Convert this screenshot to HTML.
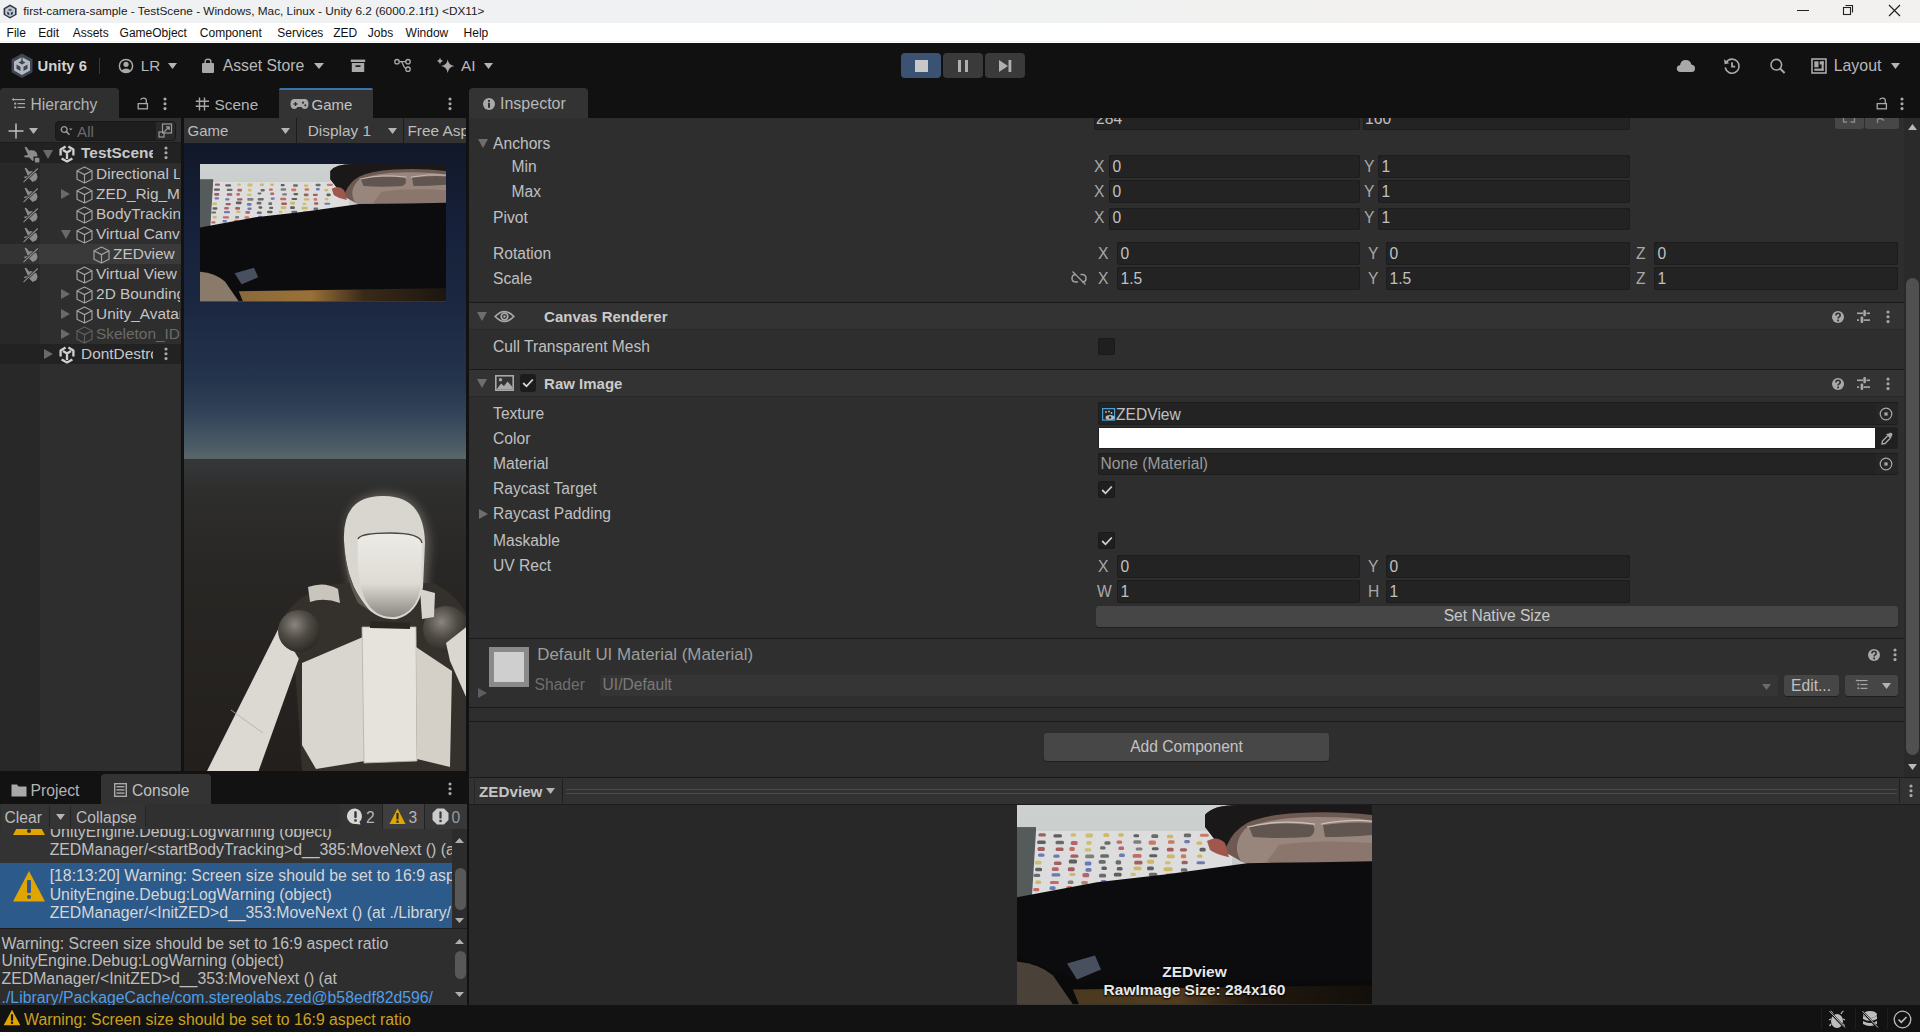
<!DOCTYPE html><html><head><meta charset="utf-8"><style>
html,body{margin:0;padding:0;}
body{width:1920px;height:1032px;overflow:hidden;position:relative;background:#282828;font-family:"Liberation Sans",sans-serif;}
.t{position:absolute;white-space:nowrap;line-height:1;}
.r{position:absolute;}
svg.r{overflow:visible;}
</style></head><body>
<div class="r" style="left:0px;top:0px;width:1920px;height:23px;background:linear-gradient(90deg,#eff1f3 0%,#f0f1f2 50%,#f3f1ef 80%,#f2f1f0 100%);"></div>
<svg class="r" style="left:3px;top:4px;" width="15" height="15" viewBox="0 0 15 15"><path d="M7 0.6 L13.6 4.2 L13.6 10.8 L7 14.4 L0.6 10.8 L0.6 4.2Z" fill="#2e3640"/><path d="M7 2.2 L12 5 L12 10.2 L7 13 L2.2 10.2 L2.2 5Z" fill="#c0cad6"/><path d="M7 4.6 L9.4 5.9 L7 7.2 L4.6 5.9Z" fill="#5a6470"/><path d="M4.2 7.6 L6.2 8.8 V11.2 L4.2 10Z M9.8 7.6 L7.8 8.8 V11.2 L9.8 10Z" fill="#2e3640"/></svg>
<div class="t" style="left:23.3px;top:5.6px;font-size:11.8px;color:#1a1a1a;">first-camera-sample - TestScene - Windows, Mac, Linux - Unity 6.2 (6000.2.1f1) &lt;DX11&gt;</div>
<div class="r" style="left:1797px;top:10px;width:12px;height:1px;background:#222;"></div>
<svg class="r" style="left:1842px;top:4px;" width="12" height="12" viewBox="0 0 12 12"><rect x="1.5" y="3.5" width="7" height="7" fill="none" stroke="#222" stroke-width="1.1"/><path d="M3.5 1.5 H10.5 V8.5" fill="none" stroke="#222" stroke-width="1.1"/></svg>
<svg class="r" style="left:1888px;top:4px;" width="13" height="13" viewBox="0 0 13 13"><path d="M1 1 L12 12 M12 1 L1 12" stroke="#222" stroke-width="1.2"/></svg>
<div class="r" style="left:0px;top:23px;width:1920px;height:20px;background:#ffffff;"></div>
<div class="r" style="left:0px;top:41px;width:1920px;height:1px;background:#f0f0f0;"></div>
<div class="t" style="left:6.6px;top:26.8px;font-size:12px;color:#111;">File</div>
<div class="t" style="left:38.3px;top:26.8px;font-size:12px;color:#111;">Edit</div>
<div class="t" style="left:72.7px;top:26.8px;font-size:12px;color:#111;">Assets</div>
<div class="t" style="left:119.6px;top:26.8px;font-size:12px;color:#111;">GameObject</div>
<div class="t" style="left:199.8px;top:26.8px;font-size:12px;color:#111;">Component</div>
<div class="t" style="left:277.3px;top:26.8px;font-size:12px;color:#111;">Services</div>
<div class="t" style="left:333.2px;top:26.8px;font-size:12px;color:#111;">ZED</div>
<div class="t" style="left:367.8px;top:26.8px;font-size:12px;color:#111;">Jobs</div>
<div class="t" style="left:405.6px;top:26.8px;font-size:12px;color:#111;">Window</div>
<div class="t" style="left:463.6px;top:26.8px;font-size:12px;color:#111;">Help</div>
<div class="r" style="left:0px;top:43px;width:1920px;height:45px;background:#111111;"></div>
<svg class="r" style="left:11px;top:53px;" width="22" height="26" viewBox="0 0 22 26"><path d="M11 0.4 L21.5 6.3 L21.5 19.3 L11 24.9 L0.5 19.3 L0.5 6.3Z" fill="#3e4652"/><path d="M11 4 L19 8.5 L19 17.5 L11 22 L3 17.5 L3 8.5Z" fill="#b4b8c0"/><path d="M11 7.5 L14.5 9.5 L11 11.5 L7.5 9.5Z" fill="#3e4652"/><rect x="10.4" y="3" width="1.2" height="5" fill="#3e4652"/><path d="M5.5 11.5 L9.5 13.7 L9.5 18 L5.5 15.8Z M16.5 11.5 L12.5 13.7 L12.5 18 L16.5 15.8Z" fill="#3e4652"/></svg>
<div class="t" style="left:37.6px;top:58.8px;font-size:14.8px;color:#d2d2d2;font-weight:bold;">Unity 6</div>
<div class="r" style="left:99px;top:58px;width:1px;height:16px;background:#3a3a3a;"></div>
<svg class="r" style="left:118px;top:58px;" width="16" height="16" viewBox="0 0 16 16"><circle cx="8" cy="8" r="6.6" fill="none" stroke="#a9a9a9" stroke-width="1.5"/><circle cx="8" cy="6.3" r="2.6" fill="#a9a9a9"/><path d="M3.3 12.5 Q8 8.6 12.7 12.5 L11 14 Q8 15 5 14Z" fill="#a9a9a9"/></svg>
<div class="t" style="left:140.7px;top:58.1px;font-size:15.2px;color:#b8b8b8;">LR</div>
<svg class="r" style="left:168px;top:63px;" width="9" height="6" viewBox="0 0 9 6"><path d="M0 0 H9 L4.5 6Z" fill="#b4b4b4"/></svg>
<svg class="r" style="left:201px;top:58px;" width="14" height="16" viewBox="0 0 14 16"><path d="M4.2 5 V3.2 Q4.2 1.2 7 1.2 Q9.8 1.2 9.8 3.2 V5" fill="none" stroke="#a9a9a9" stroke-width="1.4"/><rect x="1" y="5" width="12" height="10" rx="1" fill="#a9a9a9"/></svg>
<div class="t" style="left:222.7px;top:58.2px;font-size:15.8px;color:#b8b8b8;">Asset Store</div>
<svg class="r" style="left:313.6px;top:63px;" width="10" height="6" viewBox="0 0 10 6"><path d="M0 0 H10 L5.0 6Z" fill="#b4b4b4"/></svg>
<svg class="r" style="left:350px;top:58px;" width="16" height="16" viewBox="0 0 16 16"><rect x="0.8" y="1.6" width="14.4" height="2.4" fill="#a9a9a9"/><rect x="1.8" y="5" width="12.4" height="9" fill="#a9a9a9"/><rect x="5.5" y="7.3" width="5" height="1.6" fill="#121212"/></svg>
<svg class="r" style="left:393px;top:57px;" width="18" height="17" viewBox="0 0 18 17"><circle cx="4" cy="4.7" r="2.2" fill="none" stroke="#a9a9a9" stroke-width="1.3"/><circle cx="15" cy="4.7" r="2.2" fill="none" stroke="#a9a9a9" stroke-width="1.3"/><circle cx="15" cy="12.2" r="2.2" fill="none" stroke="#a9a9a9" stroke-width="1.3"/><path d="M6.2 4.7 H12.8 M7.5 4.7 Q9 4.7 10 7.5 Q11 10.5 12.8 11.6" fill="none" stroke="#a9a9a9" stroke-width="1.3"/></svg>
<svg class="r" style="left:436px;top:56px;" width="20" height="20" viewBox="0 0 20 20"><path d="M11.7 3.5 Q12.5 9 18.3 10 Q12.5 11 11.7 17 Q10.9 11 5 10 Q10.9 9 11.7 3.5Z" fill="#a9a9a9"/><path d="M4 1.2 Q4.4 4.4 7.2 5 Q4.4 5.6 4 8.8 Q3.6 5.6 0.8 5 Q3.6 4.4 4 1.2Z" fill="#a9a9a9"/></svg>
<div class="t" style="left:461.0px;top:57.9px;font-size:15.4px;color:#b8b8b8;">AI</div>
<svg class="r" style="left:484px;top:63px;" width="9" height="6" viewBox="0 0 9 6"><path d="M0 0 H9 L4.5 6Z" fill="#b4b4b4"/></svg>
<div class="r" style="left:901px;top:53px;width:40px;height:25px;background:#3b5273;border-radius:4px;"></div>
<div class="r" style="left:915px;top:60px;width:12.5px;height:12px;background:#c8c8c8;"></div>
<div class="r" style="left:943px;top:53px;width:40px;height:25px;background:#3a3a3a;border-radius:4px;"></div>
<div class="r" style="left:957.5px;top:60px;width:3.6px;height:12px;background:#b0b0b0;"></div>
<div class="r" style="left:964.5px;top:60px;width:3.6px;height:12px;background:#b0b0b0;"></div>
<div class="r" style="left:985px;top:53px;width:40px;height:25px;background:#3a3a3a;border-radius:4px;"></div>
<svg class="r" style="left:998px;top:60px;" width="15" height="12" viewBox="0 0 15 12"><path d="M1 0 L10 6 L1 12Z" fill="#b0b0b0"/><rect x="10.5" y="0" width="2.8" height="12" fill="#b0b0b0"/></svg>
<svg class="r" style="left:1676px;top:58px;" width="20" height="15" viewBox="0 0 20 15"><path d="M4.5 14 Q0.8 14 0.8 10.6 Q0.8 7.5 4 7.2 Q4.8 2 9.8 2 Q14.5 2 15.3 6.6 Q19 7 19 10.5 Q19 14 15.5 14Z" fill="#a9a9a9"/></svg>
<svg class="r" style="left:1723px;top:57px;" width="18" height="18" viewBox="0 0 18 18"><path d="M3.3 5.2 A7 7 0 1 1 2.2 10.5" fill="none" stroke="#a9a9a9" stroke-width="1.6"/><path d="M1 2.2 L1.6 7.2 L6.3 6.2Z" fill="#a9a9a9"/><path d="M9 5.2 V9.7 H12.2" fill="none" stroke="#a9a9a9" stroke-width="1.8"/></svg>
<svg class="r" style="left:1769px;top:57px;" width="18" height="18" viewBox="0 0 18 18"><circle cx="7.3" cy="7.7" r="5.3" fill="none" stroke="#a9a9a9" stroke-width="1.6"/><path d="M11 11.5 L15.6 16" stroke="#a9a9a9" stroke-width="2"/></svg>
<svg class="r" style="left:1811px;top:58px;" width="16" height="16" viewBox="0 0 16 16"><rect x="1" y="1" width="14" height="14" fill="none" stroke="#a9a9a9" stroke-width="1.6"/><rect x="3.3" y="3.3" width="4.2" height="6" fill="#a9a9a9"/><rect x="8.7" y="3.3" width="4" height="3.2" fill="#a9a9a9"/><rect x="3.3" y="10.6" width="9.4" height="2.2" fill="#a9a9a9"/><rect x="10.6" y="3.3" width="2.1" height="9" fill="#a9a9a9"/></svg>
<div class="t" style="left:1833.7px;top:58.3px;font-size:15.9px;color:#b8b8b8;">Layout</div>
<svg class="r" style="left:1891px;top:63px;" width="9" height="6" viewBox="0 0 9 6"><path d="M0 0 H9 L4.5 6Z" fill="#b4b4b4"/></svg>
<div class="r" style="left:0px;top:88px;width:1920px;height:30px;background:#111111;"></div>
<div class="r" style="left:0px;top:88px;width:119px;height:30px;background:#2f2f2f;border-radius:4px 4px 0 0;"></div>
<svg class="r" style="left:11px;top:98px;" width="15" height="11" viewBox="0 0 15 11"><path d="M0.5 1.5 L3 0 V3Z" fill="#a9a9a9"/><rect x="3" y="1" width="11" height="1.2" fill="#a9a9a9"/><rect x="3.2" y="4.6" width="2" height="2" fill="#a9a9a9"/><rect x="6.5" y="5" width="7.5" height="1.2" fill="#a9a9a9"/><rect x="3.2" y="8.4" width="2" height="2" fill="#a9a9a9"/><rect x="6.5" y="8.8" width="7.5" height="1.2" fill="#a9a9a9"/></svg>
<div class="t" style="left:30.6px;top:96.7px;font-size:15.6px;color:#b4b4b4;">Hierarchy</div>
<svg class="r" style="left:137px;top:97px;" width="12" height="13" viewBox="0 0 12 13"><path d="M9.3 6.2 V3.6 Q9.3 1.2 6.6 1.2 Q4.4 1.2 3.6 2.6" fill="none" stroke="#a9a9a9" stroke-width="1.3"/><rect x="1.2" y="6.6" width="9.2" height="5.2" fill="none" stroke="#a9a9a9" stroke-width="1.3"/></svg>
<svg class="r" style="left:162.5px;top:96.5px;" width="4" height="14" viewBox="0 0 4 14"><circle cx="2" cy="2.0" r="1.55" fill="#a9a9a9"/><circle cx="2" cy="6.8" r="1.55" fill="#a9a9a9"/><circle cx="2" cy="11.6" r="1.55" fill="#a9a9a9"/></svg>
<svg class="r" style="left:195px;top:97px;" width="15" height="14" viewBox="0 0 15 14"><path d="M4.5 0.5 V13.5 M9.5 0.5 V13.5 M0.8 4.2 H14 M0.8 9.2 H14" stroke="#a9a9a9" stroke-width="1.4"/></svg>
<div class="t" style="left:214.6px;top:96.9px;font-size:15.4px;color:#b4b4b4;">Scene</div>
<div class="r" style="left:279px;top:88px;width:94px;height:30px;background:#333333;border-radius:4px 4px 0 0;"></div>
<div class="r" style="left:279px;top:88px;width:94px;height:2px;background:#3a72b0;border-radius:3px 3px 0 0;"></div>
<svg class="r" style="left:290px;top:98px;" width="19" height="12" viewBox="0 0 19 12"><path d="M4.5 1 H14.5 Q18.5 1 18.5 6 Q18.5 11 14.5 11 Q12.5 11 11.5 9 H7.5 Q6.5 11 4.5 11 Q0.5 11 0.5 6 Q0.5 1 4.5 1Z" fill="#a9a9a9"/><path d="M3.5 6 H7.5 M5.5 4 V8" stroke="#333" stroke-width="1.3"/><circle cx="13" cy="4.7" r="1.1" fill="#333"/><circle cx="15.3" cy="7.3" r="1.1" fill="#333"/></svg>
<div class="t" style="left:311.6px;top:97.2px;font-size:15.0px;color:#c4c4c4;">Game</div>
<svg class="r" style="left:448px;top:96.5px;" width="4" height="14" viewBox="0 0 4 14"><circle cx="2" cy="2.0" r="1.55" fill="#a9a9a9"/><circle cx="2" cy="6.8" r="1.55" fill="#a9a9a9"/><circle cx="2" cy="11.6" r="1.55" fill="#a9a9a9"/></svg>
<div class="r" style="left:469px;top:88px;width:119px;height:30px;background:#333333;border-radius:4px 4px 0 0;"></div>
<svg class="r" style="left:483px;top:98px;" width="12" height="12" viewBox="0 0 12 12"><circle cx="6" cy="6" r="6" fill="#a9a9a9"/><rect x="5" y="4.8" width="2" height="5" fill="#303030"/><rect x="5" y="2" width="2" height="1.8" fill="#303030"/></svg>
<div class="t" style="left:500.0px;top:96.4px;font-size:16.0px;color:#b8b8b8;">Inspector</div>
<svg class="r" style="left:1875.5px;top:96.8px;" width="12" height="13" viewBox="0 0 12 13"><path d="M9.3 6.2 V3.6 Q9.3 1.2 6.6 1.2 Q4.4 1.2 3.6 2.6" fill="none" stroke="#a9a9a9" stroke-width="1.3"/><rect x="1.2" y="6.6" width="9.2" height="5.2" fill="none" stroke="#a9a9a9" stroke-width="1.3"/></svg>
<svg class="r" style="left:1899.5px;top:96.5px;" width="4" height="14" viewBox="0 0 4 14"><circle cx="2" cy="2.0" r="1.55" fill="#a9a9a9"/><circle cx="2" cy="6.8" r="1.55" fill="#a9a9a9"/><circle cx="2" cy="11.6" r="1.55" fill="#a9a9a9"/></svg>
<div class="r" style="left:181px;top:118px;width:3px;height:653px;background:#121212;"></div>
<div class="r" style="left:466px;top:118px;width:3px;height:659px;background:#121212;"></div>
<div class="r" style="left:0px;top:118px;width:181px;height:25px;background:#2f2f2f;"></div>
<div class="r" style="left:0px;top:142px;width:181px;height:1px;background:#1c1c1c;"></div>
<div class="r" style="left:0px;top:143px;width:181px;height:628px;background:#2e2e2e;"></div>
<div class="r" style="left:0px;top:143px;width:40px;height:628px;background:#282828;"></div>
<svg class="r" style="left:8px;top:123px;" width="16" height="16" viewBox="0 0 16 16"><path d="M8 0.5 V15.5 M0.5 8 H15.5" stroke="#c0c0c0" stroke-width="1.5"/></svg>
<svg class="r" style="left:29px;top:128px;" width="9" height="6" viewBox="0 0 9 6"><path d="M0 0 H9 L4.5 6Z" fill="#b4b4b4"/></svg>
<div class="r" style="left:55px;top:121px;width:121px;height:20px;background:#1e1e1e;border-radius:4px;border:1px solid #181818;box-sizing:border-box;"></div>
<div class="r" style="left:156px;top:122px;width:19px;height:18px;background:#2a2a2a;border-radius:0 3px 3px 0;"></div>
<svg class="r" style="left:60px;top:125px;" width="13" height="12" viewBox="0 0 13 12"><circle cx="4.2" cy="4.5" r="2.9" fill="none" stroke="#9a9a9a" stroke-width="1.4"/><path d="M6.3 6.6 L9.5 9.8" stroke="#9a9a9a" stroke-width="1.6"/><path d="M9 3.5 H12.5 L10.75 5.6Z" fill="#9a9a9a"/></svg>
<div class="t" style="left:77.1px;top:124.1px;font-size:15.2px;color:#6a6a6a;">All</div>
<svg class="r" style="left:158px;top:123px;" width="15" height="15" viewBox="0 0 15 15"><rect x="4.5" y="1" width="9" height="9" fill="none" stroke="#9a9a9a" stroke-width="1.2"/><rect x="1" y="9" width="5" height="5" fill="none" stroke="#9a9a9a" stroke-width="1.2"/><path d="M6.5 8.5 L11 4 M8 3.8 H11.2 V7" fill="none" stroke="#9a9a9a" stroke-width="1.2"/></svg>
<div class="r" style="left:0px;top:143px;width:181px;height:20px;background:#222222;"></div>
<svg class="r" style="left:22.5px;top:145.8px;" width="16" height="16" viewBox="0 0 16 16"><path d="M1.6 1.2 Q2.6 0.2 3.6 1.2 L6.3 4.8 L7.6 4 L9.6 4.6 L11.2 4.6 L13.6 6.6 L14.6 10 L13.2 13.2 L9.6 15 L6.2 11.6 L1.8 11.2 Q0.6 10.3 1.6 9.4 L5 9 Z" fill="#8c8c8c"/><rect x="10.5" y="10.5" width="6.5" height="6.5" fill="#222222"/><rect x="11.8" y="11.8" width="4.6" height="4.8" rx="1" fill="#8c8c8c"/></svg>
<svg class="r" style="left:43px;top:150px;" width="10" height="9" viewBox="0 0 10 9"><path d="M0 0 H10 L5 9Z" fill="#6a6a6a"/></svg>
<svg class="r" style="left:56px;top:142px;" width="24" height="24" viewBox="0 0 24 24"><path d="M4.6 13.5 V7.6 L9.6 4.6 M17.4 13.5 V7.6 L12.4 4.6 M7 8 L11 10.5 L15 8 M11 10.5 V17 M5.6 16.4 L11 19.4 L16.4 16.4" fill="none" stroke="#cfcfcf" stroke-width="2.3" stroke-linejoin="round"/></svg>
<div class="r" style="left:80px;top:143px;width:73px;height:20px;overflow:hidden;"><div class="t" style="left:1.1px;top:2.2px;font-size:15.4px;color:#c8c8c8;font-weight:bold;">TestScene</div>
</div>
<svg class="r" style="left:163.5px;top:146px;" width="4" height="14" viewBox="0 0 4 14"><circle cx="2" cy="2.0" r="1.55" fill="#a9a9a9"/><circle cx="2" cy="6.8" r="1.55" fill="#a9a9a9"/><circle cx="2" cy="11.6" r="1.55" fill="#a9a9a9"/></svg>
<div class="r" style="left:0px;top:163px;width:181px;height:1px;background:#2a2a2a;"></div>
<svg class="r" style="left:22.5px;top:166.8px;" width="16" height="16" viewBox="0 0 16 16"><path d="M1.6 1.2 Q2.6 0.2 3.6 1.2 L6.3 4.8 L7.6 4 L9.6 4.6 L11.2 4.6 L13.6 6.6 L14.6 10 L13.2 13.2 L9.6 15 L6.2 11.6 L1.8 11.2 Q0.6 10.3 1.6 9.4 L5 9 Z" fill="#8c8c8c"/><path d="M0.3 15.2 L15 1.2" stroke="#282828" stroke-width="2.6"/><path d="M0.5 15.2 L14.8 1.5" stroke="#8c8c8c" stroke-width="1.1"/></svg>
<svg class="r" style="left:76px;top:166px;" width="17" height="18" viewBox="0 0 17 18"><path d="M8.5 1 L16 4.8 L16 13.2 L8.5 17 L1 13.2 L1 4.8Z M1 4.8 L8.5 8.6 L16 4.8 M8.5 8.6 V17" fill="none" stroke="#a0a0a0" stroke-width="1.2" stroke-linejoin="round"/></svg>
<div class="r" style="left:95px;top:164px;width:85px;height:20px;overflow:hidden;"><div class="t" style="left:1.1px;top:2.2px;font-size:15.4px;color:#c4c4c4;">Directional Light</div>
</div>
<svg class="r" style="left:22.5px;top:186.8px;" width="16" height="16" viewBox="0 0 16 16"><path d="M1.6 1.2 Q2.6 0.2 3.6 1.2 L6.3 4.8 L7.6 4 L9.6 4.6 L11.2 4.6 L13.6 6.6 L14.6 10 L13.2 13.2 L9.6 15 L6.2 11.6 L1.8 11.2 Q0.6 10.3 1.6 9.4 L5 9 Z" fill="#8c8c8c"/><path d="M0.3 15.2 L15 1.2" stroke="#282828" stroke-width="2.6"/><path d="M0.5 15.2 L14.8 1.5" stroke="#8c8c8c" stroke-width="1.1"/></svg>
<svg class="r" style="left:61px;top:189px;" width="9" height="10" viewBox="0 0 9 10"><path d="M0 0 L9 5 L0 10Z" fill="#6a6a6a"/></svg>
<svg class="r" style="left:76px;top:186px;" width="17" height="18" viewBox="0 0 17 18"><path d="M8.5 1 L16 4.8 L16 13.2 L8.5 17 L1 13.2 L1 4.8Z M1 4.8 L8.5 8.6 L16 4.8 M8.5 8.6 V17" fill="none" stroke="#a0a0a0" stroke-width="1.2" stroke-linejoin="round"/></svg>
<div class="r" style="left:95px;top:184px;width:85px;height:20px;overflow:hidden;"><div class="t" style="left:1.1px;top:2.2px;font-size:15.4px;color:#c4c4c4;">ZED_Rig_Mono</div>
</div>
<svg class="r" style="left:22.5px;top:206.8px;" width="16" height="16" viewBox="0 0 16 16"><path d="M1.6 1.2 Q2.6 0.2 3.6 1.2 L6.3 4.8 L7.6 4 L9.6 4.6 L11.2 4.6 L13.6 6.6 L14.6 10 L13.2 13.2 L9.6 15 L6.2 11.6 L1.8 11.2 Q0.6 10.3 1.6 9.4 L5 9 Z" fill="#8c8c8c"/><path d="M0.3 15.2 L15 1.2" stroke="#282828" stroke-width="2.6"/><path d="M0.5 15.2 L14.8 1.5" stroke="#8c8c8c" stroke-width="1.1"/></svg>
<svg class="r" style="left:76px;top:206px;" width="17" height="18" viewBox="0 0 17 18"><path d="M8.5 1 L16 4.8 L16 13.2 L8.5 17 L1 13.2 L1 4.8Z M1 4.8 L8.5 8.6 L16 4.8 M8.5 8.6 V17" fill="none" stroke="#a0a0a0" stroke-width="1.2" stroke-linejoin="round"/></svg>
<div class="r" style="left:95px;top:204px;width:85px;height:20px;overflow:hidden;"><div class="t" style="left:1.1px;top:2.2px;font-size:15.4px;color:#c4c4c4;">BodyTrackingManager</div>
</div>
<svg class="r" style="left:22.5px;top:226.8px;" width="16" height="16" viewBox="0 0 16 16"><path d="M1.6 1.2 Q2.6 0.2 3.6 1.2 L6.3 4.8 L7.6 4 L9.6 4.6 L11.2 4.6 L13.6 6.6 L14.6 10 L13.2 13.2 L9.6 15 L6.2 11.6 L1.8 11.2 Q0.6 10.3 1.6 9.4 L5 9 Z" fill="#8c8c8c"/><path d="M0.3 15.2 L15 1.2" stroke="#282828" stroke-width="2.6"/><path d="M0.5 15.2 L14.8 1.5" stroke="#8c8c8c" stroke-width="1.1"/></svg>
<svg class="r" style="left:61px;top:230px;" width="10" height="9" viewBox="0 0 10 9"><path d="M0 0 H10 L5 9Z" fill="#6a6a6a"/></svg>
<svg class="r" style="left:76px;top:226px;" width="17" height="18" viewBox="0 0 17 18"><path d="M8.5 1 L16 4.8 L16 13.2 L8.5 17 L1 13.2 L1 4.8Z M1 4.8 L8.5 8.6 L16 4.8 M8.5 8.6 V17" fill="none" stroke="#a0a0a0" stroke-width="1.2" stroke-linejoin="round"/></svg>
<div class="r" style="left:95px;top:224px;width:85px;height:20px;overflow:hidden;"><div class="t" style="left:1.1px;top:2.2px;font-size:15.4px;color:#c4c4c4;">Virtual Canvas</div>
</div>
<div class="r" style="left:0px;top:244px;width:181px;height:20px;background:#3a3a3a;"></div>
<div class="r" style="left:0px;top:244px;width:39px;height:20px;background:#333333;"></div>
<svg class="r" style="left:22.5px;top:246.8px;" width="16" height="16" viewBox="0 0 16 16"><path d="M1.6 1.2 Q2.6 0.2 3.6 1.2 L6.3 4.8 L7.6 4 L9.6 4.6 L11.2 4.6 L13.6 6.6 L14.6 10 L13.2 13.2 L9.6 15 L6.2 11.6 L1.8 11.2 Q0.6 10.3 1.6 9.4 L5 9 Z" fill="#8c8c8c"/><path d="M0.3 15.2 L15 1.2" stroke="#333333" stroke-width="2.6"/><path d="M0.5 15.2 L14.8 1.5" stroke="#8c8c8c" stroke-width="1.1"/></svg>
<svg class="r" style="left:93px;top:246px;" width="17" height="18" viewBox="0 0 17 18"><path d="M8.5 1 L16 4.8 L16 13.2 L8.5 17 L1 13.2 L1 4.8Z M1 4.8 L8.5 8.6 L16 4.8 M8.5 8.6 V17" fill="none" stroke="#a0a0a0" stroke-width="1.2" stroke-linejoin="round"/></svg>
<div class="r" style="left:112px;top:244px;width:68px;height:20px;overflow:hidden;"><div class="t" style="left:1.1px;top:2.2px;font-size:15.4px;color:#c4c4c4;">ZEDview</div>
</div>
<svg class="r" style="left:22.5px;top:266.8px;" width="16" height="16" viewBox="0 0 16 16"><path d="M1.6 1.2 Q2.6 0.2 3.6 1.2 L6.3 4.8 L7.6 4 L9.6 4.6 L11.2 4.6 L13.6 6.6 L14.6 10 L13.2 13.2 L9.6 15 L6.2 11.6 L1.8 11.2 Q0.6 10.3 1.6 9.4 L5 9 Z" fill="#8c8c8c"/><path d="M0.3 15.2 L15 1.2" stroke="#282828" stroke-width="2.6"/><path d="M0.5 15.2 L14.8 1.5" stroke="#8c8c8c" stroke-width="1.1"/></svg>
<svg class="r" style="left:76px;top:266px;" width="17" height="18" viewBox="0 0 17 18"><path d="M8.5 1 L16 4.8 L16 13.2 L8.5 17 L1 13.2 L1 4.8Z M1 4.8 L8.5 8.6 L16 4.8 M8.5 8.6 V17" fill="none" stroke="#a0a0a0" stroke-width="1.2" stroke-linejoin="round"/></svg>
<div class="r" style="left:95px;top:264px;width:85px;height:20px;overflow:hidden;"><div class="t" style="left:1.1px;top:2.2px;font-size:15.4px;color:#c4c4c4;">Virtual View</div>
</div>
<svg class="r" style="left:61px;top:289px;" width="9" height="10" viewBox="0 0 9 10"><path d="M0 0 L9 5 L0 10Z" fill="#6a6a6a"/></svg>
<svg class="r" style="left:76px;top:286px;" width="17" height="18" viewBox="0 0 17 18"><path d="M8.5 1 L16 4.8 L16 13.2 L8.5 17 L1 13.2 L1 4.8Z M1 4.8 L8.5 8.6 L16 4.8 M8.5 8.6 V17" fill="none" stroke="#a0a0a0" stroke-width="1.2" stroke-linejoin="round"/></svg>
<div class="r" style="left:95px;top:284px;width:85px;height:20px;overflow:hidden;"><div class="t" style="left:1.1px;top:2.2px;font-size:15.4px;color:#c4c4c4;">2D Bounding Box</div>
</div>
<svg class="r" style="left:61px;top:309px;" width="9" height="10" viewBox="0 0 9 10"><path d="M0 0 L9 5 L0 10Z" fill="#6a6a6a"/></svg>
<svg class="r" style="left:76px;top:306px;" width="17" height="18" viewBox="0 0 17 18"><path d="M8.5 1 L16 4.8 L16 13.2 L8.5 17 L1 13.2 L1 4.8Z M1 4.8 L8.5 8.6 L16 4.8 M8.5 8.6 V17" fill="none" stroke="#a0a0a0" stroke-width="1.2" stroke-linejoin="round"/></svg>
<div class="r" style="left:95px;top:304px;width:85px;height:20px;overflow:hidden;"><div class="t" style="left:1.1px;top:2.2px;font-size:15.4px;color:#c4c4c4;">Unity_Avatar</div>
</div>
<svg class="r" style="left:61px;top:329px;" width="9" height="10" viewBox="0 0 9 10"><path d="M0 0 L9 5 L0 10Z" fill="#6a6a6a"/></svg>
<svg class="r" style="left:76px;top:326px;" width="17" height="18" viewBox="0 0 17 18"><path d="M8.5 1 L16 4.8 L16 13.2 L8.5 17 L1 13.2 L1 4.8Z M1 4.8 L8.5 8.6 L16 4.8 M8.5 8.6 V17" fill="none" stroke="#5e5e5e" stroke-width="1.2" stroke-linejoin="round"/></svg>
<div class="r" style="left:95px;top:324px;width:85px;height:20px;overflow:hidden;"><div class="t" style="left:1.1px;top:2.2px;font-size:15.4px;color:#6a6a6a;">Skeleton_ID</div>
</div>
<div class="r" style="left:0px;top:344px;width:181px;height:20px;background:#222222;"></div>
<svg class="r" style="left:44px;top:349px;" width="9" height="10" viewBox="0 0 9 10"><path d="M0 0 L9 5 L0 10Z" fill="#6a6a6a"/></svg>
<svg class="r" style="left:56px;top:343px;" width="24" height="24" viewBox="0 0 24 24"><path d="M4.6 13.5 V7.6 L9.6 4.6 M17.4 13.5 V7.6 L12.4 4.6 M7 8 L11 10.5 L15 8 M11 10.5 V17 M5.6 16.4 L11 19.4 L16.4 16.4" fill="none" stroke="#cfcfcf" stroke-width="2.3" stroke-linejoin="round"/></svg>
<div class="r" style="left:80px;top:344px;width:73px;height:20px;overflow:hidden;"><div class="t" style="left:1.1px;top:2.2px;font-size:15.4px;color:#c8c8c8;">DontDestroyOnLoad</div>
</div>
<svg class="r" style="left:163.5px;top:347px;" width="4" height="14" viewBox="0 0 4 14"><circle cx="2" cy="2.0" r="1.55" fill="#a9a9a9"/><circle cx="2" cy="6.8" r="1.55" fill="#a9a9a9"/><circle cx="2" cy="11.6" r="1.55" fill="#a9a9a9"/></svg>
<div class="r" style="left:184px;top:118px;width:283px;height:26px;background:#323232;"></div>
<div class="r" style="left:184px;top:143px;width:283px;height:1px;background:#1a1a1a;"></div>
<div class="r" style="left:296px;top:118px;width:1px;height:25px;background:#1c1c1c;"></div>
<div class="r" style="left:403px;top:118px;width:1px;height:25px;background:#1c1c1c;"></div>
<div class="t" style="left:187.5px;top:123.2px;font-size:15.0px;color:#bdbdbd;">Game</div>
<svg class="r" style="left:281px;top:128px;" width="9" height="6" viewBox="0 0 9 6"><path d="M0 0 H9 L4.5 6Z" fill="#b4b4b4"/></svg>
<div class="t" style="left:307.7px;top:122.9px;font-size:15.4px;color:#bdbdbd;">Display 1</div>
<svg class="r" style="left:388px;top:128px;" width="9" height="6" viewBox="0 0 9 6"><path d="M0 0 H9 L4.5 6Z" fill="#b4b4b4"/></svg>
<div class="r" style="left:404px;top:118px;width:63px;height:25px;overflow:hidden;"><div class="t" style="left:3.4px;top:4.9px;font-size:15.4px;color:#bdbdbd;">Free Aspect</div>
</div>
<div class="r" style="left:184px;top:144px;width:283px;height:315px;background:linear-gradient(180deg,#111828 0%,#16203a 25%,#1b2740 50%,#24344c 75%,#34465a 87%,#4c5c66 96%,#5a6868 100%);"></div>
<div class="r" style="left:184px;top:459px;width:283px;height:312px;background:linear-gradient(180deg,#35383a 0%,#2e2e2d 10%,#292725 35%,#221f1c 100%);"></div>
<div class="r" style="left:184px;top:458px;width:283px;height:1px;background:#56625f;"></div>
<svg width="0" height="0" style="position:absolute"><symbol id="cam" viewBox="0 0 355 199" preserveAspectRatio="none"><defs><linearGradient id="gface" x1="0" y1="0" x2="1" y2="0"><stop offset="0" stop-color="#6e5550"/><stop offset="0.3" stop-color="#9a8a84"/><stop offset="0.7" stop-color="#a39690"/><stop offset="1" stop-color="#857670"/></linearGradient><linearGradient id="gwood" x1="0" y1="0" x2="1" y2="0"><stop offset="0" stop-color="#8a6a3a"/><stop offset="0.35" stop-color="#9a7038"/><stop offset="0.6" stop-color="#3a2a18"/><stop offset="1" stop-color="#1c1610"/></linearGradient><linearGradient id="gwall" x1="0" y1="0" x2="0" y2="1"><stop offset="0" stop-color="#cdd1d0"/><stop offset="1" stop-color="#b8bdbc"/></linearGradient></defs><rect width="355" height="199" fill="url(#gwall)"/><rect x="0" y="22" width="19" height="72" fill="#555b5a"/><path d="M19 26 L215 26 L215 62 L150 70 L15 90Z" fill="#dcdddc"/><rect x="21.3" y="28.3" width="7.6" height="3.1" rx="1.5" fill="#8a2a2a" opacity="0.7"/><rect x="36.4" y="29.2" width="8.6" height="3.3" rx="1.5" fill="#2a2a2a" opacity="0.7"/><rect x="53.7" y="28.1" width="5.4" height="3.5" rx="1.5" fill="#c8b040" opacity="0.7"/><rect x="68.5" y="28.4" width="7.5" height="4.1" rx="1.5" fill="#c8b040" opacity="0.7"/><rect x="86.3" y="28.1" width="5.9" height="3.7" rx="1.5" fill="#c8a830" opacity="0.7"/><rect x="101.2" y="28.3" width="5.5" height="3.4" rx="1.5" fill="#c8a830" opacity="0.7"/><rect x="116.4" y="29.1" width="5.8" height="3.1" rx="1.5" fill="#2a2a2a" opacity="0.7"/><rect x="134.3" y="29.2" width="7.0" height="3.6" rx="1.5" fill="#3a3a3a" opacity="0.7"/><rect x="149.9" y="29.8" width="6.4" height="3.3" rx="1.5" fill="#c8a830" opacity="0.7"/><rect x="166.8" y="28.5" width="7.3" height="3.6" rx="1.5" fill="#3a3a3a" opacity="0.7"/><rect x="182.9" y="28.6" width="8.9" height="3.1" rx="1.5" fill="#c05030" opacity="0.7"/><rect x="20.1" y="35.3" width="8.7" height="3.5" rx="1.5" fill="#2a2a2a" opacity="0.7"/><rect x="38.5" y="35.7" width="8.5" height="3.4" rx="1.5" fill="#3a3a3a" opacity="0.7"/><rect x="53.8" y="35.8" width="6.8" height="4.0" rx="1.5" fill="#a03040" opacity="0.7"/><rect x="69.3" y="35.9" width="5.2" height="3.8" rx="1.5" fill="#c8b040" opacity="0.7"/><rect x="87.4" y="36.2" width="6.1" height="3.5" rx="1.5" fill="#3a3a3a" opacity="0.7"/><rect x="99.5" y="35.5" width="5.7" height="3.1" rx="1.5" fill="#b83a30" opacity="0.7"/><rect x="116.3" y="35.2" width="8.0" height="3.5" rx="1.5" fill="#555555" opacity="0.7"/><rect x="131.7" y="35.5" width="7.2" height="4.1" rx="1.5" fill="#c05030" opacity="0.7"/><rect x="150.9" y="35.2" width="6.7" height="3.4" rx="1.5" fill="#c05030" opacity="0.7"/><rect x="167.2" y="34.9" width="5.7" height="3.3" rx="1.5" fill="#3a50a0" opacity="0.7"/><rect x="179.4" y="36.3" width="5.7" height="3.3" rx="1.5" fill="#c8a830" opacity="0.7"/><rect x="20.5" y="41.9" width="7.3" height="4.1" rx="1.5" fill="#8a2a2a" opacity="0.7"/><rect x="38.6" y="42.5" width="8.0" height="3.5" rx="1.5" fill="#8a2a2a" opacity="0.7"/><rect x="52.4" y="42.0" width="5.4" height="3.8" rx="1.5" fill="#b83a30" opacity="0.7"/><rect x="67.6" y="43.2" width="6.8" height="3.1" rx="1.5" fill="#c8b040" opacity="0.7"/><rect x="83.0" y="41.2" width="5.6" height="3.1" rx="1.5" fill="#3a3a3a" opacity="0.7"/><rect x="101.3" y="41.3" width="5.8" height="3.5" rx="1.5" fill="#a03040" opacity="0.7"/><rect x="118.6" y="42.4" width="6.9" height="3.1" rx="1.5" fill="#555555" opacity="0.7"/><rect x="134.8" y="42.1" width="6.9" height="3.1" rx="1.5" fill="#2a2a2a" opacity="0.7"/><rect x="149.8" y="42.7" width="6.9" height="3.8" rx="1.5" fill="#8a2a2a" opacity="0.7"/><rect x="162.9" y="43.1" width="7.1" height="3.2" rx="1.5" fill="#8a2a2a" opacity="0.7"/><rect x="182.5" y="42.7" width="6.2" height="3.8" rx="1.5" fill="#2a2a2a" opacity="0.7"/><rect x="21.0" y="48.3" width="6.5" height="3.2" rx="1.5" fill="#3a50a0" opacity="0.7"/><rect x="36.3" y="49.4" width="6.3" height="3.3" rx="1.5" fill="#3a50a0" opacity="0.7"/><rect x="53.4" y="49.4" width="8.0" height="3.3" rx="1.5" fill="#8a2a2a" opacity="0.7"/><rect x="68.2" y="49.3" width="9.0" height="3.9" rx="1.5" fill="#555555" opacity="0.7"/><rect x="83.2" y="49.2" width="8.8" height="3.5" rx="1.5" fill="#3a3a3a" opacity="0.7"/><rect x="102.0" y="48.5" width="5.9" height="3.3" rx="1.5" fill="#3a50a0" opacity="0.7"/><rect x="115.6" y="48.8" width="8.9" height="3.7" rx="1.5" fill="#b83a30" opacity="0.7"/><rect x="132.1" y="49.1" width="8.2" height="3.1" rx="1.5" fill="#2a2a2a" opacity="0.7"/><rect x="149.8" y="49.4" width="8.0" height="3.6" rx="1.5" fill="#c8a830" opacity="0.7"/><rect x="163.9" y="49.1" width="5.3" height="4.1" rx="1.5" fill="#c05030" opacity="0.7"/><rect x="180.1" y="49.3" width="5.3" height="3.2" rx="1.5" fill="#c8a830" opacity="0.7"/><rect x="17.7" y="55.6" width="6.9" height="3.8" rx="1.5" fill="#c8b040" opacity="0.7"/><rect x="36.9" y="56.4" width="7.6" height="3.4" rx="1.5" fill="#8a2a2a" opacity="0.7"/><rect x="51.8" y="54.4" width="8.2" height="3.9" rx="1.5" fill="#2a2a2a" opacity="0.7"/><rect x="67.7" y="56.3" width="6.7" height="4.0" rx="1.5" fill="#3a50a0" opacity="0.7"/><rect x="81.7" y="54.8" width="7.0" height="3.9" rx="1.5" fill="#3a3a3a" opacity="0.7"/><rect x="98.6" y="55.2" width="5.5" height="4.1" rx="1.5" fill="#3a3a3a" opacity="0.7"/><rect x="117.2" y="55.7" width="8.3" height="3.6" rx="1.5" fill="#8a2a2a" opacity="0.7"/><rect x="130.1" y="54.7" width="7.0" height="4.0" rx="1.5" fill="#c8a830" opacity="0.7"/><rect x="148.0" y="56.0" width="5.6" height="3.2" rx="1.5" fill="#c8b040" opacity="0.7"/><rect x="164.5" y="55.5" width="6.3" height="3.6" rx="1.5" fill="#8a2a2a" opacity="0.7"/><rect x="179.5" y="56.0" width="8.5" height="3.1" rx="1.5" fill="#3a50a0" opacity="0.7"/><rect x="18.1" y="62.5" width="7.0" height="3.7" rx="1.5" fill="#2a2a2a" opacity="0.7"/><rect x="34.8" y="62.2" width="7.0" height="3.6" rx="1.5" fill="#a03040" opacity="0.7"/><rect x="50.8" y="62.1" width="6.9" height="4.1" rx="1.5" fill="#8a2a2a" opacity="0.7"/><rect x="68.5" y="62.9" width="6.0" height="3.7" rx="1.5" fill="#3a50a0" opacity="0.7"/><rect x="84.4" y="61.3" width="5.5" height="3.5" rx="1.5" fill="#2a2a2a" opacity="0.7"/><rect x="99.7" y="61.9" width="5.9" height="3.4" rx="1.5" fill="#2a2a2a" opacity="0.7"/><rect x="116.6" y="61.3" width="7.9" height="3.8" rx="1.5" fill="#c8a830" opacity="0.7"/><rect x="130.0" y="61.3" width="6.9" height="3.9" rx="1.5" fill="#2a2a2a" opacity="0.7"/><rect x="146.6" y="62.0" width="9.0" height="4.0" rx="1.5" fill="#c8a830" opacity="0.7"/><rect x="163.8" y="63.0" width="6.6" height="3.5" rx="1.5" fill="#3a3a3a" opacity="0.7"/><rect x="16.5" y="68.7" width="6.8" height="3.0" rx="1.5" fill="#3a3a3a" opacity="0.7"/><rect x="34.5" y="68.2" width="8.8" height="3.1" rx="1.5" fill="#3a50a0" opacity="0.7"/><rect x="52.3" y="67.8" width="6.1" height="3.0" rx="1.5" fill="#c8a830" opacity="0.7"/><rect x="65.5" y="67.9" width="6.7" height="4.1" rx="1.5" fill="#a03040" opacity="0.7"/><rect x="82.0" y="68.7" width="7.1" height="3.6" rx="1.5" fill="#3a3a3a" opacity="0.7"/><rect x="96.8" y="67.7" width="7.8" height="3.5" rx="1.5" fill="#2a2a2a" opacity="0.7"/><rect x="113.5" y="67.6" width="5.4" height="3.3" rx="1.5" fill="#c8b040" opacity="0.7"/><rect x="131.8" y="67.7" width="8.5" height="3.5" rx="1.5" fill="#3a3a3a" opacity="0.7"/><rect x="148.4" y="68.4" width="8.7" height="3.7" rx="1.5" fill="#b83a30" opacity="0.7"/><rect x="162.5" y="68.1" width="5.4" height="3.2" rx="1.5" fill="#b83a30" opacity="0.7"/><rect x="18.3" y="75.3" width="5.8" height="3.5" rx="1.5" fill="#c8a830" opacity="0.7"/><rect x="32.9" y="75.8" width="9.0" height="3.0" rx="1.5" fill="#b83a30" opacity="0.7"/><rect x="50.7" y="75.3" width="5.8" height="3.6" rx="1.5" fill="#555555" opacity="0.7"/><rect x="64.2" y="75.8" width="6.7" height="3.6" rx="1.5" fill="#c05030" opacity="0.7"/><rect x="83.7" y="74.8" width="5.9" height="3.3" rx="1.5" fill="#3a50a0" opacity="0.7"/><rect x="99.1" y="75.6" width="7.5" height="3.5" rx="1.5" fill="#3a3a3a" opacity="0.7"/><rect x="115.7" y="75.9" width="5.1" height="3.8" rx="1.5" fill="#a03040" opacity="0.7"/><rect x="129.5" y="74.3" width="7.7" height="3.5" rx="1.5" fill="#8a2a2a" opacity="0.7"/><rect x="146.5" y="74.8" width="6.0" height="3.4" rx="1.5" fill="#555555" opacity="0.7"/><rect x="160.5" y="74.7" width="5.0" height="3.4" rx="1.5" fill="#3a3a3a" opacity="0.7"/><rect x="16.2" y="82.7" width="6.2" height="3.4" rx="1.5" fill="#b83a30" opacity="0.7"/><rect x="32.5" y="81.0" width="6.1" height="3.8" rx="1.5" fill="#3a50a0" opacity="0.7"/><rect x="49.2" y="80.8" width="6.1" height="3.1" rx="1.5" fill="#c05030" opacity="0.7"/><rect x="65.5" y="81.6" width="6.2" height="3.8" rx="1.5" fill="#2a2a2a" opacity="0.7"/><rect x="81.5" y="81.9" width="8.0" height="3.8" rx="1.5" fill="#c8b040" opacity="0.7"/><rect x="96.8" y="81.5" width="8.9" height="3.2" rx="1.5" fill="#c8b040" opacity="0.7"/><rect x="113.8" y="80.9" width="8.3" height="4.1" rx="1.5" fill="#c05030" opacity="0.7"/><rect x="130.1" y="82.4" width="5.6" height="3.6" rx="1.5" fill="#8a2a2a" opacity="0.7"/><rect x="145.5" y="82.4" width="5.1" height="3.8" rx="1.5" fill="#3a50a0" opacity="0.7"/><rect x="159.5" y="80.9" width="7.5" height="4.2" rx="1.5" fill="#c05030" opacity="0.7"/><path d="M188 10 Q196 0 220 0 L355 0 L355 62 Q320 68 285 66 Q245 64 224 56 L206 46 Q196 32 188 22Z" fill="#6e5a52"/><path d="M224 56 Q214 40 228 24 Q252 12 300 12 Q340 12 355 16 L355 62 Q320 68 285 66 Q245 64 224 56Z" fill="#98867c"/><path d="M262 40 Q300 34 355 38 L355 62 Q320 68 285 66 Q262 62 250 56Z" fill="#8a766c"/><path d="M188 10 Q196 0 220 0 L355 0 L355 10 Q320 6 280 8 Q246 10 230 18 Q216 26 210 40 L206 46 Q196 32 188 22Z" fill="#1a1818"/><path d="M232 22 Q262 16 296 20 Q300 28 292 32 Q262 34 236 32Z" fill="#4a403c" opacity="0.7"/><path d="M306 20 Q335 16 355 18 L355 30 Q330 32 308 32Z" fill="#4a403c" opacity="0.7"/><path d="M230 22 Q262 14 298 19 M304 19 Q330 14 355 16" fill="none" stroke="#d8d0c8" stroke-width="1.3" opacity="0.8"/><path d="M190 36 Q200 30 208 38 L212 52 Q200 50 193 45Z" fill="#a0584e"/><path d="M0 92 L80 77 L150 69 L230 58 L300 57 L355 56 L355 199 L0 199Z" fill="#0c0c0f"/><path d="M0 156 Q22 158 36 170 L56 199 L0 199Z" fill="#8a7a6a"/><path d="M50 158 L78 150 L84 164 L60 174Z" fill="#7a88a4" opacity="0.55"/><path d="M56 184 L355 180 L355 199 L62 199Z" fill="url(#gwood)"/></symbol></svg>
<svg class="r" style="left:200px;top:164px" width="246" height="137.5"><use href="#cam" width="246" height="137.5"/></svg>
<svg class="r" style="left:184px;top:459px;overflow:hidden" width="283" height="312" viewBox="0 0 283 312"><g><defs><radialGradient id="gsh" cx="0.4" cy="0.35" r="0.7"><stop offset="0" stop-color="#8a867e"/><stop offset="0.5" stop-color="#4e4a44"/><stop offset="1" stop-color="#2a2723"/></radialGradient><linearGradient id="gvis" x1="0" y1="0" x2="0" y2="1"><stop offset="0" stop-color="#ecebe6"/><stop offset="0.6" stop-color="#dedbd4"/><stop offset="1" stop-color="#8a8680"/></linearGradient><filter id="blur3" x="-50%" y="-50%" width="200%" height="200%"><feGaussianBlur stdDeviation="5"/></filter></defs><path d="M162 82 Q158 36 200 34 Q242 34 246 86 L242 132 Q236 162 212 166 Q186 168 174 144 Q160 118 162 82Z" fill="#8a857c" opacity="0.55" filter="url(#blur3)"/><path d="M98 160 Q118 128 160 124 L250 124 Q276 138 283 158 L283 312 L118 312 L112 220Z" fill="#34302b"/><path d="M95.5 167.5 L114.8 199.7 L74.6 312 L23 312Z" fill="#dcd9d2"/><path d="M47 251 Q62 262 79 274" fill="none" stroke="#b0aca4" stroke-width="0.8"/><circle cx="115" cy="172" r="21" fill="url(#gsh)"/><circle cx="262" cy="170" r="23" fill="url(#gsh)"/><path d="M262 184 L283 167.5 L283 240 L266 202Z" fill="#dad7d0"/><path d="M124 128 Q140 122 154 130 L156 144 Q140 138 126 143Z" fill="#c9c5bd"/><path d="M236 130 L251 134 L250 158 L238 160Z" fill="#d6d3cc"/><path d="M118 204 L179 178 L181 302 L132 310 L118 286Z" fill="#d9d6cf"/><path d="M178 168 L232 168 L233 302 L180 304Z" fill="#e6e3dc" stroke="#b4b0a8" stroke-width="0.8"/><path d="M232 188 L268 212 L266 308 L233 300Z" fill="#d4d0c8"/><path d="M186 162 L226 164 L226 170 L186 169Z" fill="#2a2622"/><path d="M160 82 Q158 36 200 37 Q240 37 241 84 L239 128 Q234 154 213 160 Q190 162 176 140 Q162 118 160 82Z" fill="#d9d6cf"/><path d="M160 70 Q158 100 170 128 Q176 140 186 152 L174 144 Q160 118 160 82Z" fill="#5a5650"/><path d="M174 80 Q176 74 206 74 Q237 74 238 84 L237 126 Q233 154 211 158 Q190 159 181 140 Q172 120 174 80Z" fill="url(#gvis)"/><path d="M174 80 Q176 74 206 74 Q237 74 238 84" fill="none" stroke="#4a4640" stroke-width="1.4"/></g></svg>
<div class="r" style="left:181px;top:118px;width:3px;height:653px;background:#121212;"></div>
<div class="r" style="left:466px;top:118px;width:3px;height:659px;background:#121212;"></div>
<div class="r" style="left:469px;top:118px;width:1435px;height:659px;background:#2e2e2e;"></div>
<div class="r" style="left:1904px;top:118px;width:16px;height:659px;background:#2a2a2a;"></div>
<svg class="r" style="left:1908px;top:124px;" width="9" height="6" viewBox="0 0 9 6"><path d="M0 6 L4.5 0 L9 6Z" fill="#b8b8b8"/></svg>
<svg class="r" style="left:1908px;top:764px;" width="9" height="6" viewBox="0 0 9 6"><path d="M0 0 L9 0 L4.5 6Z" fill="#b8b8b8"/></svg>
<div class="r" style="left:1906px;top:278px;width:13px;height:477px;background:#505050;border-radius:7px;"></div>
<div class="r" style="left:469px;top:118px;width:1435px;height:659px;overflow:hidden;"><div class="r" style="left:625px;top:-10.5px;width:266px;height:22.5px;background:#232323;border-radius:3px;box-shadow:inset 0 0 0 1px #1d1d1d,inset 0 1px 0 #171717;"></div>
<div class="r" style="left:894px;top:-10.5px;width:267px;height:22.5px;background:#232323;border-radius:3px;box-shadow:inset 0 0 0 1px #1d1d1d,inset 0 1px 0 #171717;"></div>
<div class="t" style="left:627.1px;top:-7.3px;font-size:15.6px;color:#c0c0c0;">284</div>
<div class="t" style="left:896.1px;top:-7.3px;font-size:15.6px;color:#c0c0c0;">160</div>
<div class="r" style="left:1366px;top:-11px;width:29px;height:22px;background:#474747;border-radius:3px;"></div>
<div class="r" style="left:1396px;top:-11px;width:33.5px;height:22px;background:#474747;border-radius:3px;"></div>
<svg class="r" style="left:1374px;top:0px;" width="12" height="6" viewBox="0 0 12 6"><path d="M0.5 0 L0.5 4 L4 4 M7.5 4 L11.5 4 L11.5 0" fill="none" stroke="#8a8a8a" stroke-width="1.4"/></svg>
<svg class="r" style="left:1407px;top:0px;" width="10" height="6" viewBox="0 0 10 6"><path d="M1.5 5 V1.5 Q4.5 -1 8 2.5" fill="none" stroke="#8a8a8a" stroke-width="1.4"/></svg>
</div>
<svg class="r" style="left:478px;top:139px;" width="10" height="9" viewBox="0 0 10 9"><path d="M0 0 H10 L5 9Z" fill="#6e6e6e"/></svg>
<div class="t" style="left:493.1px;top:135.7px;font-size:15.6px;color:#c0c0c0;">Anchors</div>
<div class="t" style="left:511.6px;top:159.0px;font-size:15.6px;color:#c0c0c0;">Min</div>
<div class="t" style="left:1094.1px;top:159.0px;font-size:15.6px;color:#a8a8a8;">X</div>
<div class="r" style="left:1109px;top:155px;width:251px;height:22.5px;background:#232323;border-radius:3px;box-shadow:inset 0 0 0 1px #1d1d1d,inset 0 1px 0 #171717;"></div>
<div class="t" style="left:1112.6px;top:159.0px;font-size:15.6px;color:#c0c0c0;">0</div>
<div class="t" style="left:1364.1px;top:159.0px;font-size:15.6px;color:#a8a8a8;">Y</div>
<div class="r" style="left:1378px;top:155px;width:252px;height:22.5px;background:#232323;border-radius:3px;box-shadow:inset 0 0 0 1px #1d1d1d,inset 0 1px 0 #171717;"></div>
<div class="t" style="left:1381.6px;top:159.0px;font-size:15.6px;color:#c0c0c0;">1</div>
<div class="t" style="left:511.6px;top:183.7px;font-size:15.6px;color:#c0c0c0;">Max</div>
<div class="t" style="left:1094.1px;top:183.7px;font-size:15.6px;color:#a8a8a8;">X</div>
<div class="r" style="left:1109px;top:180px;width:251px;height:22.5px;background:#232323;border-radius:3px;box-shadow:inset 0 0 0 1px #1d1d1d,inset 0 1px 0 #171717;"></div>
<div class="t" style="left:1112.6px;top:183.7px;font-size:15.6px;color:#c0c0c0;">0</div>
<div class="t" style="left:1364.1px;top:183.7px;font-size:15.6px;color:#a8a8a8;">Y</div>
<div class="r" style="left:1378px;top:180px;width:252px;height:22.5px;background:#232323;border-radius:3px;box-shadow:inset 0 0 0 1px #1d1d1d,inset 0 1px 0 #171717;"></div>
<div class="t" style="left:1381.6px;top:183.7px;font-size:15.6px;color:#c0c0c0;">1</div>
<div class="t" style="left:493.1px;top:210.2px;font-size:15.6px;color:#c0c0c0;">Pivot</div>
<div class="t" style="left:1094.1px;top:210.2px;font-size:15.6px;color:#a8a8a8;">X</div>
<div class="r" style="left:1109px;top:207.5px;width:251px;height:22.5px;background:#232323;border-radius:3px;box-shadow:inset 0 0 0 1px #1d1d1d,inset 0 1px 0 #171717;"></div>
<div class="t" style="left:1112.6px;top:210.2px;font-size:15.6px;color:#c0c0c0;">0</div>
<div class="t" style="left:1364.1px;top:210.2px;font-size:15.6px;color:#a8a8a8;">Y</div>
<div class="r" style="left:1378px;top:207.5px;width:252px;height:22.5px;background:#232323;border-radius:3px;box-shadow:inset 0 0 0 1px #1d1d1d,inset 0 1px 0 #171717;"></div>
<div class="t" style="left:1381.6px;top:210.2px;font-size:15.6px;color:#c0c0c0;">1</div>
<div class="t" style="left:493.1px;top:245.7px;font-size:15.6px;color:#c0c0c0;">Rotation</div>
<div class="t" style="left:1098.1px;top:245.7px;font-size:15.6px;color:#a8a8a8;">X</div>
<div class="r" style="left:1117px;top:242px;width:243px;height:22.5px;background:#232323;border-radius:3px;box-shadow:inset 0 0 0 1px #1d1d1d,inset 0 1px 0 #171717;"></div>
<div class="t" style="left:1120.6px;top:245.7px;font-size:15.6px;color:#c0c0c0;">0</div>
<div class="t" style="left:1368.1px;top:245.7px;font-size:15.6px;color:#a8a8a8;">Y</div>
<div class="r" style="left:1386px;top:242px;width:244px;height:22.5px;background:#232323;border-radius:3px;box-shadow:inset 0 0 0 1px #1d1d1d,inset 0 1px 0 #171717;"></div>
<div class="t" style="left:1389.6px;top:245.7px;font-size:15.6px;color:#c0c0c0;">0</div>
<div class="t" style="left:1636.1px;top:245.7px;font-size:15.6px;color:#a8a8a8;">Z</div>
<div class="r" style="left:1654px;top:242px;width:244px;height:22.5px;background:#232323;border-radius:3px;box-shadow:inset 0 0 0 1px #1d1d1d,inset 0 1px 0 #171717;"></div>
<div class="t" style="left:1657.6px;top:245.7px;font-size:15.6px;color:#c0c0c0;">0</div>
<div class="t" style="left:493.1px;top:270.7px;font-size:15.6px;color:#c0c0c0;">Scale</div>
<div class="t" style="left:1098.1px;top:270.7px;font-size:15.6px;color:#a8a8a8;">X</div>
<div class="r" style="left:1117px;top:267px;width:243px;height:22.5px;background:#232323;border-radius:3px;box-shadow:inset 0 0 0 1px #1d1d1d,inset 0 1px 0 #171717;"></div>
<div class="t" style="left:1120.6px;top:270.7px;font-size:15.6px;color:#c0c0c0;">1.5</div>
<div class="t" style="left:1368.1px;top:270.7px;font-size:15.6px;color:#a8a8a8;">Y</div>
<div class="r" style="left:1386px;top:267px;width:244px;height:22.5px;background:#232323;border-radius:3px;box-shadow:inset 0 0 0 1px #1d1d1d,inset 0 1px 0 #171717;"></div>
<div class="t" style="left:1389.6px;top:270.7px;font-size:15.6px;color:#c0c0c0;">1.5</div>
<div class="t" style="left:1636.1px;top:270.7px;font-size:15.6px;color:#a8a8a8;">Z</div>
<div class="r" style="left:1654px;top:267px;width:244px;height:22.5px;background:#232323;border-radius:3px;box-shadow:inset 0 0 0 1px #1d1d1d,inset 0 1px 0 #171717;"></div>
<div class="t" style="left:1657.6px;top:270.7px;font-size:15.6px;color:#c0c0c0;">1</div>
<svg class="r" style="left:1071px;top:271px;" width="16" height="15" viewBox="0 0 16 15"><path d="M5 3.5 Q1 3.5 1 7.5 Q1 11 5 11 H7 M9.5 3.5 H11 Q15 3.5 15 7.5 Q15 11 11 11" fill="none" stroke="#a0a0a0" stroke-width="1.5"/><path d="M1.5 0.5 L14.5 13.5" stroke="#a0a0a0" stroke-width="1.3"/></svg>
<div class="r" style="left:469px;top:302px;width:1435px;height:1px;background:#1a1a1a;"></div>
<div class="r" style="left:469px;top:303px;width:1435px;height:26px;background:#333333;"></div>
<div class="r" style="left:469px;top:329px;width:1435px;height:1px;background:#282828;"></div>
<svg class="r" style="left:477px;top:312px;" width="10" height="9" viewBox="0 0 10 9"><path d="M0 0 H10 L5 9Z" fill="#6e6e6e"/></svg>
<svg class="r" style="left:494px;top:309px;" width="21" height="15" viewBox="0 0 21 15"><path d="M1.2 7.5 Q10.5 -2.5 19.8 7.5 Q10.5 17.5 1.2 7.5Z" fill="none" stroke="#a9a9a9" stroke-width="1.7"/><circle cx="10.5" cy="7.5" r="3.3" fill="none" stroke="#a9a9a9" stroke-width="1.7"/><circle cx="10.5" cy="7.5" r="1.2" fill="#a9a9a9"/></svg>
<div class="t" style="left:544.1px;top:309.1px;font-size:15.0px;color:#cacaca;font-weight:bold;">Canvas Renderer</div>
<svg class="r" style="left:1832px;top:310.5px;" width="12" height="12" viewBox="0 0 12 12"><circle cx="6" cy="6" r="6" fill="#a9a9a9"/><path d="M3.9 4.6 Q3.9 2.3 6 2.3 Q8.2 2.3 8.2 4.3 Q8.2 5.5 6.9 6.1 Q6.1 6.5 6.1 7.6" fill="none" stroke="#303030" stroke-width="1.6"/><rect x="5.2" y="8.6" width="1.8" height="1.7" fill="#303030"/></svg>
<svg class="r" style="left:1857px;top:310px;" width="13" height="13" viewBox="0 0 13 13"><rect x="0" y="2.5" width="6" height="1.6" fill="#a9a9a9"/><rect x="6.3" y="0" width="2.6" height="6.3" rx="1" fill="#a9a9a9"/><rect x="9.5" y="2.5" width="3.5" height="1.6" fill="#a9a9a9"/><rect x="0" y="9.3" width="2" height="1.6" fill="#a9a9a9"/><rect x="3.6" y="6.6" width="2.6" height="6.3" rx="1" fill="#a9a9a9"/><rect x="6.6" y="9.3" width="6.4" height="1.6" fill="#a9a9a9"/></svg>
<svg class="r" style="left:1885.5px;top:309.5px;" width="4" height="14" viewBox="0 0 4 14"><circle cx="2" cy="2.0" r="1.55" fill="#a9a9a9"/><circle cx="2" cy="6.8" r="1.55" fill="#a9a9a9"/><circle cx="2" cy="11.6" r="1.55" fill="#a9a9a9"/></svg>
<div class="t" style="left:493.1px;top:339.0px;font-size:15.6px;color:#c0c0c0;">Cull Transparent Mesh</div>
<div class="r" style="left:1098px;top:338px;width:17px;height:17px;background:#1f1f1f;border-radius:3px;box-shadow:inset 0 0 0 1px #1a1a1a;"></div>
<div class="r" style="left:469px;top:369px;width:1435px;height:1px;background:#1a1a1a;"></div>
<div class="r" style="left:469px;top:370px;width:1435px;height:26px;background:#333333;"></div>
<div class="r" style="left:469px;top:396px;width:1435px;height:1px;background:#282828;"></div>
<svg class="r" style="left:477px;top:379px;" width="10" height="9" viewBox="0 0 10 9"><path d="M0 0 H10 L5 9Z" fill="#6e6e6e"/></svg>
<svg class="r" style="left:495px;top:375px;" width="19" height="16" viewBox="0 0 19 16"><rect x="0.8" y="0.8" width="17.4" height="14.4" fill="none" stroke="#a9a9a9" stroke-width="1.6"/><path d="M1.5 14.5 L6 8.5 L9 11 L12.5 6.5 L17.5 12 V14.5Z" fill="#a9a9a9"/><circle cx="5.5" cy="4.8" r="1.7" fill="#a9a9a9"/></svg>
<div class="r" style="left:519.5px;top:374px;width:16.5px;height:17.5px;background:#1c1c1c;border-radius:3px;"></div>
<svg class="r" style="left:522px;top:378px;" width="12" height="10" viewBox="0 0 12 10"><path d="M1.2 5 L4.5 8.3 L10.8 1.5" fill="none" stroke="#d8d8d8" stroke-width="1.8"/></svg>
<div class="t" style="left:544.1px;top:376.1px;font-size:15.0px;color:#cacaca;font-weight:bold;">Raw Image</div>
<svg class="r" style="left:1832px;top:377.5px;" width="12" height="12" viewBox="0 0 12 12"><circle cx="6" cy="6" r="6" fill="#a9a9a9"/><path d="M3.9 4.6 Q3.9 2.3 6 2.3 Q8.2 2.3 8.2 4.3 Q8.2 5.5 6.9 6.1 Q6.1 6.5 6.1 7.6" fill="none" stroke="#303030" stroke-width="1.6"/><rect x="5.2" y="8.6" width="1.8" height="1.7" fill="#303030"/></svg>
<svg class="r" style="left:1857px;top:377px;" width="13" height="13" viewBox="0 0 13 13"><rect x="0" y="2.5" width="6" height="1.6" fill="#a9a9a9"/><rect x="6.3" y="0" width="2.6" height="6.3" rx="1" fill="#a9a9a9"/><rect x="9.5" y="2.5" width="3.5" height="1.6" fill="#a9a9a9"/><rect x="0" y="9.3" width="2" height="1.6" fill="#a9a9a9"/><rect x="3.6" y="6.6" width="2.6" height="6.3" rx="1" fill="#a9a9a9"/><rect x="6.6" y="9.3" width="6.4" height="1.6" fill="#a9a9a9"/></svg>
<svg class="r" style="left:1885.5px;top:376.5px;" width="4" height="14" viewBox="0 0 4 14"><circle cx="2" cy="2.0" r="1.55" fill="#a9a9a9"/><circle cx="2" cy="6.8" r="1.55" fill="#a9a9a9"/><circle cx="2" cy="11.6" r="1.55" fill="#a9a9a9"/></svg>
<div class="t" style="left:493.1px;top:405.7px;font-size:15.6px;color:#c0c0c0;">Texture</div>
<div class="r" style="left:1098px;top:402px;width:800px;height:22.5px;background:#232323;border-radius:3px;box-shadow:inset 0 0 0 1px #1d1d1d,inset 0 1px 0 #171717;"></div>
<div class="r" style="left:1876px;top:403px;width:22px;height:21px;background:#262626;border-radius:0 3px 3px 0;"></div>
<svg class="r" style="left:1879px;top:406.5px;" width="14" height="14" viewBox="0 0 14 14"><circle cx="7" cy="7" r="5.8" fill="none" stroke="#a8a8a8" stroke-width="1.2"/><rect x="5.4" y="5.4" width="3.2" height="3.2" fill="#a8a8a8"/></svg>
<svg class="r" style="left:1102px;top:408px;" width="14" height="13" viewBox="0 0 14 13"><rect x="0.6" y="0.6" width="12" height="11.5" fill="none" stroke="#4aa0d0" stroke-width="1.2"/><circle cx="4" cy="4" r="0.9" fill="#bbb"/><circle cx="7" cy="3.5" r="0.9" fill="#bbb"/><circle cx="9.5" cy="5" r="0.9" fill="#bbb"/><ellipse cx="8" cy="9.5" rx="4.5" ry="2.5" fill="#bbb"/><circle cx="8" cy="9.5" r="1.2" fill="#202020"/></svg>
<div class="t" style="left:1116.1px;top:406.7px;font-size:15.6px;color:#c0c0c0;">ZEDView</div>
<div class="t" style="left:493.1px;top:430.7px;font-size:15.6px;color:#c0c0c0;">Color</div>
<div class="r" style="left:1098px;top:427px;width:800px;height:22px;background:#202020;border-radius:3px;"></div>
<div class="r" style="left:1099px;top:428px;width:776px;height:20px;background:#ffffff;"></div>
<svg class="r" style="left:1881px;top:432px;" width="12" height="13" viewBox="0 0 12 13"><path d="M9.5 0.8 Q11.5 0.8 11.5 2.8 Q11.5 3.8 10 5 L10.6 5.6 L9.4 6.8 L5.2 2.6 L6.4 1.4 L7 2 Q8.2 0.8 9.5 0.8Z" fill="#a8a8a8"/><path d="M6.5 4 L1.5 9 L1 12 L4 11.5 L9 6.5" fill="none" stroke="#a8a8a8" stroke-width="1.4"/></svg>
<div class="t" style="left:493.1px;top:455.7px;font-size:15.6px;color:#c0c0c0;">Material</div>
<div class="r" style="left:1098px;top:452.5px;width:800px;height:22px;background:#232323;border-radius:3px;box-shadow:inset 0 0 0 1px #1d1d1d,inset 0 1px 0 #171717;"></div>
<div class="r" style="left:1876px;top:453.5px;width:22px;height:20px;background:#262626;border-radius:0 3px 3px 0;"></div>
<svg class="r" style="left:1879px;top:457px;" width="14" height="14" viewBox="0 0 14 14"><circle cx="7" cy="7" r="5.8" fill="none" stroke="#a8a8a8" stroke-width="1.2"/><rect x="5.4" y="5.4" width="3.2" height="3.2" fill="#a8a8a8"/></svg>
<div class="t" style="left:1100.6px;top:456.3px;font-size:15.6px;color:#9a9a9a;">None (Material)</div>
<div class="t" style="left:493.1px;top:480.7px;font-size:15.6px;color:#c0c0c0;">Raycast Target</div>
<div class="r" style="left:1098px;top:480.5px;width:17px;height:17px;background:#1f1f1f;border-radius:3px;box-shadow:inset 0 0 0 1px #1a1a1a;"></div>
<svg class="r" style="left:1101px;top:484.5px;" width="12" height="10" viewBox="0 0 12 10"><path d="M1.2 5 L4.5 8.3 L10.8 1.5" fill="none" stroke="#d0d0d0" stroke-width="1.8"/></svg>
<svg class="r" style="left:479px;top:508.5px;" width="9" height="10" viewBox="0 0 9 10"><path d="M0 0 L9 5 L0 10Z" fill="#6e6e6e"/></svg>
<div class="t" style="left:493.1px;top:505.7px;font-size:15.6px;color:#c0c0c0;">Raycast Padding</div>
<div class="t" style="left:493.1px;top:533.4px;font-size:15.6px;color:#c0c0c0;">Maskable</div>
<div class="r" style="left:1098px;top:531.5px;width:17px;height:17px;background:#1f1f1f;border-radius:3px;box-shadow:inset 0 0 0 1px #1a1a1a;"></div>
<svg class="r" style="left:1101px;top:535.5px;" width="12" height="10" viewBox="0 0 12 10"><path d="M1.2 5 L4.5 8.3 L10.8 1.5" fill="none" stroke="#d0d0d0" stroke-width="1.8"/></svg>
<div class="t" style="left:493.1px;top:558.4px;font-size:15.6px;color:#c0c0c0;">UV Rect</div>
<div class="t" style="left:1098.1px;top:558.7px;font-size:15.6px;color:#a8a8a8;">X</div>
<div class="r" style="left:1117px;top:555.4px;width:243px;height:22.5px;background:#232323;border-radius:3px;box-shadow:inset 0 0 0 1px #1d1d1d,inset 0 1px 0 #171717;"></div>
<div class="t" style="left:1120.6px;top:558.7px;font-size:15.6px;color:#c0c0c0;">0</div>
<div class="t" style="left:1368.1px;top:558.7px;font-size:15.6px;color:#a8a8a8;">Y</div>
<div class="r" style="left:1386px;top:555.4px;width:244px;height:22.5px;background:#232323;border-radius:3px;box-shadow:inset 0 0 0 1px #1d1d1d,inset 0 1px 0 #171717;"></div>
<div class="t" style="left:1389.6px;top:558.7px;font-size:15.6px;color:#c0c0c0;">0</div>
<div class="t" style="left:1097.1px;top:583.7px;font-size:15.6px;color:#a8a8a8;">W</div>
<div class="r" style="left:1117px;top:580px;width:243px;height:22.5px;background:#232323;border-radius:3px;box-shadow:inset 0 0 0 1px #1d1d1d,inset 0 1px 0 #171717;"></div>
<div class="t" style="left:1120.6px;top:583.7px;font-size:15.6px;color:#c0c0c0;">1</div>
<div class="t" style="left:1368.1px;top:583.7px;font-size:15.6px;color:#a8a8a8;">H</div>
<div class="r" style="left:1386px;top:580px;width:244px;height:22.5px;background:#232323;border-radius:3px;box-shadow:inset 0 0 0 1px #1d1d1d,inset 0 1px 0 #171717;"></div>
<div class="t" style="left:1389.6px;top:583.7px;font-size:15.6px;color:#c0c0c0;">1</div>
<div class="r" style="left:1096px;top:606px;width:802px;height:21px;background:#464646;border-radius:3px;box-shadow:0 1px 0 #1e1e1e;"></div>
<div class="t" style="left:1096px;top:608px;width:802px;text-align:center;font-size:15.6px;color:#c8c8c8;">Set Native Size</div>
<div class="r" style="left:469px;top:638px;width:1435px;height:1px;background:#1a1a1a;"></div>
<div class="r" style="left:469px;top:639px;width:1435px;height:68px;background:#2f2f2f;"></div>
<div class="r" style="left:489px;top:647px;width:40px;height:40px;background:#8a8a8a;"></div>
<div class="r" style="left:494px;top:652px;width:30px;height:30px;background:#cfcfcf;"></div>
<div class="t" style="left:537.2px;top:646.6px;font-size:16.9px;color:#9e9e9e;">Default UI Material (Material)</div>
<div class="t" style="left:534.6px;top:677.2px;font-size:15.6px;color:#6e6e6e;">Shader</div>
<div class="r" style="left:600px;top:675px;width:1178px;height:21px;background:#353535;border-radius:3px;"></div>
<div class="t" style="left:602.6px;top:677.2px;font-size:15.6px;color:#7a7a7a;">UI/Default</div>
<svg class="r" style="left:1762px;top:684px;" width="9" height="6" viewBox="0 0 9 6"><path d="M0 0 H9 L4.5 6Z" fill="#6a6a6a"/></svg>
<div class="r" style="left:1784px;top:675px;width:55px;height:21px;background:#464646;border-radius:3px;box-shadow:0 1px 0 #1e1e1e;"></div>
<div class="t" style="left:1791.1px;top:677.7px;font-size:15.6px;color:#c0c0c0;">Edit...</div>
<div class="r" style="left:1845px;top:675px;width:53px;height:21px;background:#464646;border-radius:3px;box-shadow:0 1px 0 #1e1e1e;"></div>
<svg class="r" style="left:1855px;top:679px;" width="14" height="12" viewBox="0 0 14 12"><path d="M0.5 1.5 L2.5 0.2 V2.8Z" fill="#a9a9a9"/><rect x="2.5" y="1" width="10" height="1.1" fill="#a9a9a9"/><rect x="2.5" y="4.6" width="1.7" height="1.7" fill="#a9a9a9"/><rect x="5.4" y="5" width="7" height="1.1" fill="#a9a9a9"/><rect x="2.5" y="8.4" width="1.7" height="1.7" fill="#a9a9a9"/><rect x="5.4" y="8.8" width="7" height="1.1" fill="#a9a9a9"/></svg>
<svg class="r" style="left:1882px;top:683px;" width="9" height="6" viewBox="0 0 9 6"><path d="M0 0 H9 L4.5 6Z" fill="#b4b4b4"/></svg>
<svg class="r" style="left:1868px;top:649px;" width="12" height="12" viewBox="0 0 12 12"><circle cx="6" cy="6" r="6" fill="#a9a9a9"/><path d="M3.9 4.6 Q3.9 2.3 6 2.3 Q8.2 2.3 8.2 4.3 Q8.2 5.5 6.9 6.1 Q6.1 6.5 6.1 7.6" fill="none" stroke="#303030" stroke-width="1.6"/><rect x="5.2" y="8.6" width="1.8" height="1.7" fill="#303030"/></svg>
<svg class="r" style="left:1892.5px;top:648px;" width="4" height="14" viewBox="0 0 4 14"><circle cx="2" cy="2.0" r="1.55" fill="#a9a9a9"/><circle cx="2" cy="6.8" r="1.55" fill="#a9a9a9"/><circle cx="2" cy="11.6" r="1.55" fill="#a9a9a9"/></svg>
<svg class="r" style="left:478px;top:688px;" width="9" height="10" viewBox="0 0 9 10"><path d="M0 0 L9 5 L0 10Z" fill="#5e5e5e"/></svg>
<div class="r" style="left:469px;top:707px;width:1435px;height:1px;background:#1a1a1a;"></div>
<div class="r" style="left:469px;top:721px;width:1435px;height:1px;background:#1a1a1a;"></div>
<div class="r" style="left:1044px;top:733px;width:285px;height:28px;background:#474747;border-radius:3px;box-shadow:0 1px 0 #1e1e1e;"></div>
<div class="t" style="left:1044px;top:739px;width:285px;text-align:center;font-size:15.6px;color:#c4c4c4;">Add Component</div>
<div class="r" style="left:0px;top:771px;width:469px;height:33px;background:#121212;"></div>
<div class="r" style="left:101px;top:774px;width:110px;height:30px;background:#333333;border-radius:4px 4px 0 0;"></div>
<svg class="r" style="left:11px;top:784px;" width="16" height="13" viewBox="0 0 16 13"><path d="M0.5 0.5 H6 L7.5 2.5 H15.5 V12.5 H0.5Z" fill="#a9a9a9"/></svg>
<div class="t" style="left:30.6px;top:782.5px;font-size:15.7px;color:#b4b4b4;">Project</div>
<svg class="r" style="left:114px;top:783px;" width="13" height="14" viewBox="0 0 13 14"><rect x="0.7" y="0.7" width="11.6" height="12.6" fill="none" stroke="#a9a9a9" stroke-width="1.4"/><rect x="2.5" y="3" width="8" height="1.4" fill="#a9a9a9"/><rect x="2.5" y="6.2" width="8" height="1.4" fill="#a9a9a9"/><rect x="2.5" y="9.4" width="8" height="1.4" fill="#a9a9a9"/></svg>
<div class="t" style="left:132.1px;top:782.5px;font-size:15.6px;color:#c0c0c0;">Console</div>
<svg class="r" style="left:447.5px;top:782px;" width="4" height="14" viewBox="0 0 4 14"><circle cx="2" cy="2.0" r="1.55" fill="#a9a9a9"/><circle cx="2" cy="6.8" r="1.55" fill="#a9a9a9"/><circle cx="2" cy="11.6" r="1.55" fill="#a9a9a9"/></svg>
<div class="r" style="left:0px;top:804px;width:467px;height:25px;background:#303030;"></div>
<div class="r" style="left:1px;top:804px;width:48px;height:25px;background:#343434;"></div>
<div class="r" style="left:49px;top:806px;width:1px;height:21px;background:#232323;"></div>
<div class="r" style="left:50px;top:804px;width:20px;height:25px;background:#343434;"></div>
<div class="r" style="left:70px;top:806px;width:1px;height:21px;background:#232323;"></div>
<div class="r" style="left:71px;top:804px;width:74px;height:25px;background:#343434;"></div>
<div class="r" style="left:145px;top:806px;width:1px;height:21px;background:#232323;"></div>
<div class="t" style="left:4.6px;top:810.2px;font-size:15.6px;color:#bdbdbd;">Clear</div>
<svg class="r" style="left:56px;top:814px;" width="9" height="6" viewBox="0 0 9 6"><path d="M0 0 H9 L4.5 6Z" fill="#b4b4b4"/></svg>
<div class="t" style="left:76.1px;top:810.2px;font-size:15.6px;color:#bdbdbd;">Collapse</div>
<div class="r" style="left:339.5px;top:804px;width:42px;height:25px;background:#333333;"></div>
<div class="r" style="left:382.5px;top:804px;width:42px;height:25px;background:#3e3e3e;"></div>
<div class="r" style="left:425.3px;top:804px;width:42px;height:25px;background:#383838;"></div>
<div class="r" style="left:381.5px;top:804px;width:1px;height:25px;background:#222;"></div>
<div class="r" style="left:424.3px;top:804px;width:1px;height:25px;background:#222;"></div>
<svg class="r" style="left:347px;top:808px;" width="17" height="17" viewBox="0 0 17 17"><path d="M8.5 0.5 A7.8 7.8 0 1 0 8.6 16 L13.5 16.5 L12.5 13.8 A7.8 7.8 0 0 0 8.5 0.5Z" fill="#d6d6d6"/><rect x="7.3" y="3.3" width="2.4" height="6.8" rx="0.8" fill="#333"/><rect x="7.3" y="11.3" width="2.4" height="2.3" fill="#333"/></svg>
<div class="t" style="left:366.1px;top:810.1px;font-size:15.6px;color:#b4b4b4;">2</div>
<svg class="r" style="left:388.5px;top:807.5px;" width="17" height="17" viewBox="0 0 17 17"><path d="M8.5 0.5 L16.5 16 H0.5Z" fill="#e0a500"/><rect x="7.4" y="5" width="2.2" height="6.5" rx="0.6" fill="#2a2a2a"/><rect x="7.4" y="12.6" width="2.2" height="2.2" fill="#2a2a2a"/></svg>
<div class="t" style="left:408.6px;top:810.1px;font-size:15.6px;color:#b4b4b4;">3</div>
<svg class="r" style="left:431.5px;top:807.5px;" width="17" height="17" viewBox="0 0 17 17"><path d="M5 0.5 H12 L16.5 5 V12 L12 16.5 H5 L0.5 12 V5Z" fill="#cccccc"/><rect x="7.4" y="3.5" width="2.2" height="7" rx="0.6" fill="#383838"/><rect x="7.4" y="11.8" width="2.2" height="2.3" fill="#383838"/></svg>
<div class="t" style="left:451.6px;top:810.1px;font-size:15.6px;color:#9a9a9a;">0</div>
<div class="r" style="left:0;top:829px;width:452px;height:99px;overflow:hidden;background:#2e2e2e;"><div class="r" style="left:0px;top:0px;width:452px;height:33.5px;background:#333333;"></div>
<svg class="r" style="left:12px;top:-25px;" width="34" height="34" viewBox="0 0 34 34"><path d="M17 1 L33 31 H1Z" fill="#e0a500"/><rect x="15" y="10" width="4" height="13" rx="1" fill="#303030"/><rect x="15" y="25" width="4" height="4" rx="2" fill="#303030"/></svg>
<div class="t" style="left:49.7px;top:-4.7px;font-size:15.8px;color:#c0c0c0;">UnityEngine.Debug:LogWarning (object)</div>
<div class="t" style="left:49.7px;top:12.6px;font-size:15.8px;color:#c0c0c0;">ZEDManager/&lt;startBodyTracking&gt;d__385:MoveNext () (at ./Library/PackageCache/</div>
<div class="r" style="left:0px;top:34px;width:452px;height:64.5px;background:#2c5a8a;"></div>
<svg class="r" style="left:12px;top:41px;" width="34" height="33" viewBox="0 0 34 33"><path d="M17 1 L33 31.5 H1Z" fill="#e0a500"/><rect x="15" y="10" width="4" height="13" rx="1" fill="#2c5a8a"/><rect x="15" y="25" width="4" height="4" rx="2" fill="#2c5a8a"/></svg>
<div class="t" style="left:49.7px;top:39.2px;font-size:15.8px;color:#d6d6d6;">[18:13:20] Warning: Screen size should be set to 16:9 aspect ratio</div>
<div class="t" style="left:49.7px;top:57.5px;font-size:15.8px;color:#d6d6d6;">UnityEngine.Debug:LogWarning (object)</div>
<div class="t" style="left:49.7px;top:75.5px;font-size:15.8px;color:#d6d6d6;">ZEDManager/&lt;InitZED&gt;d__353:MoveNext () (at ./Library/PackageCache/</div>
</div>
<div class="r" style="left:452px;top:829px;width:15px;height:99px;background:#2c2c2c;"></div>
<svg class="r" style="left:455px;top:838px;" width="9" height="5" viewBox="0 0 9 5"><path d="M0 5 L4.5 0 L9 5Z" fill="#b0b0b0"/></svg>
<div class="r" style="left:454.5px;top:868px;width:11px;height:41.5px;background:#585858;border-radius:6px;"></div>
<svg class="r" style="left:455px;top:918px;" width="9" height="5" viewBox="0 0 9 5"><path d="M0 0 L9 0 L4.5 5Z" fill="#b0b0b0"/></svg>
<div class="r" style="left:0px;top:928px;width:467px;height:1px;background:#1c1c1c;"></div>
<div class="r" style="left:0;top:929px;width:452px;height:76px;overflow:hidden;background:#2e2e2e;"><div class="t" style="left:1.6px;top:6.5px;font-size:15.8px;color:#bdbdbd;">Warning: Screen size should be set to 16:9 aspect ratio</div>
<div class="t" style="left:1.6px;top:24.2px;font-size:15.8px;color:#bdbdbd;">UnityEngine.Debug:LogWarning (object)</div>
<div class="t" style="left:1.6px;top:42.0px;font-size:15.8px;color:#bdbdbd;">ZEDManager/&lt;InitZED&gt;d__353:MoveNext () (at</div>
<div class="t" style="left:1.6px;top:61.3px;font-size:15.8px;color:#4f9de6;">./Library/PackageCache/com.stereolabs.zed@b58edf82d596/</div>
</div>
<div class="r" style="left:452px;top:929px;width:15px;height:76px;background:#2e2e2e;"></div>
<svg class="r" style="left:455px;top:939px;" width="9" height="5" viewBox="0 0 9 5"><path d="M0 5 L4.5 0 L9 5Z" fill="#b0b0b0"/></svg>
<div class="r" style="left:454.5px;top:951px;width:11px;height:28px;background:#585858;border-radius:6px;"></div>
<svg class="r" style="left:455px;top:992px;" width="9" height="5" viewBox="0 0 9 5"><path d="M0 0 L9 0 L4.5 5Z" fill="#b0b0b0"/></svg>
<div class="r" style="left:467px;top:771px;width:2px;height:234px;background:#121212;"></div>
<div class="r" style="left:469px;top:777px;width:1451px;height:1px;background:#1a1a1a;"></div>
<div class="r" style="left:469px;top:778px;width:1451px;height:26px;background:#323232;"></div>
<div class="r" style="left:469px;top:804px;width:1451px;height:1px;background:#1c1c1c;"></div>
<div class="t" style="left:479.1px;top:783.9px;font-size:15.2px;color:#c4c4c4;font-weight:bold;">ZEDview</div>
<div class="r" style="left:474px;top:779px;width:1px;height:25px;background:#262626;"></div>
<svg class="r" style="left:546px;top:788px;" width="9" height="6" viewBox="0 0 9 6"><path d="M0 0 H9 L4.5 6Z" fill="#b4b4b4"/></svg>
<div class="r" style="left:562px;top:779px;width:1px;height:24px;background:#1f1f1f;"></div>
<div class="r" style="left:566px;top:789px;width:1331px;height:1px;background:#4a4a4a;"></div>
<div class="r" style="left:566px;top:793px;width:1331px;height:1px;background:#4a4a4a;"></div>
<div class="r" style="left:1899px;top:779px;width:1px;height:24px;background:#1f1f1f;"></div>
<svg class="r" style="left:1908.5px;top:784px;" width="4" height="14" viewBox="0 0 4 14"><circle cx="2" cy="2.0" r="1.55" fill="#a9a9a9"/><circle cx="2" cy="6.8" r="1.55" fill="#a9a9a9"/><circle cx="2" cy="11.6" r="1.55" fill="#a9a9a9"/></svg>
<div class="r" style="left:469px;top:805px;width:1451px;height:199px;background:#282828;"></div>
<svg class="r" style="left:1017px;top:805px" width="355" height="199.5"><use href="#cam" width="355" height="199.5"/><path d="M0 150 L60 176 L355 176 L355 199.5 L0 199.5Z" fill="#0a0806" opacity="0.5"/></svg>
<div class="t" style="left:1017px;top:963.8px;width:355px;text-align:center;font-size:15.5px;font-weight:bold;color:#e8e8e8;text-shadow:0 0 2px #000,0 1px 2px #000;">ZEDview</div>
<div class="t" style="left:1017px;top:981.8px;width:355px;text-align:center;font-size:15.5px;font-weight:bold;color:#e8e8e8;text-shadow:0 0 2px #000,0 1px 2px #000;">RawImage Size: 284x160</div>
<div class="r" style="left:0px;top:1005px;width:1920px;height:27px;background:#121212;"></div>
<svg class="r" style="left:2.5px;top:1009px;" width="18" height="17" viewBox="0 0 18 17"><path d="M9 0.8 L17.3 16.2 H0.7Z" fill="#e0a500"/><rect x="7.9" y="5.2" width="2.2" height="6.5" rx="0.6" fill="#121212"/><rect x="7.9" y="12.6" width="2.2" height="2.2" fill="#121212"/></svg>
<div class="t" style="left:24.1px;top:1011.8px;font-size:15.8px;color:#cba01f;">Warning: Screen size should be set to 16:9 aspect ratio</div>
<div class="r" style="left:1821px;top:1008px;width:1px;height:22px;background:#1e1e1e;"></div>
<div class="r" style="left:1855px;top:1008px;width:1px;height:22px;background:#1e1e1e;"></div>
<div class="r" style="left:1887px;top:1008px;width:1px;height:22px;background:#1e1e1e;"></div>
<svg class="r" style="left:1828px;top:1010px;" width="18" height="19" viewBox="0 0 18 19"><path d="M5 4 Q4 1.5 2.5 1 M13 4 Q14 1.5 15.5 1" stroke="#bdbdbd" stroke-width="1.3" fill="none"/><ellipse cx="9" cy="11" rx="6" ry="7" fill="#bdbdbd"/><path d="M3 9 L1 10 M15 9 L17 10 M3 14 L1.5 16 M15 14 L16.5 16" stroke="#bdbdbd" stroke-width="1.3"/><path d="M1 1 L17 18" stroke="#121212" stroke-width="2.2"/><path d="M1.5 1.2 L17 17.5" stroke="#bdbdbd" stroke-width="1"/></svg>
<svg class="r" style="left:1861px;top:1010px;" width="18" height="19" viewBox="0 0 18 19"><ellipse cx="9" cy="4.5" rx="7" ry="3.5" fill="#bdbdbd"/><path d="M2 6 V9 Q9 13 16 9 V6 Q9 10 2 6Z" fill="#bdbdbd"/><path d="M2 11 V14 Q9 18 16 14 V11 Q9 15 2 11Z" fill="#bdbdbd"/><path d="M1 1 L17 18" stroke="#121212" stroke-width="2.2"/><path d="M1.5 1.2 L17 17.5" stroke="#bdbdbd" stroke-width="1"/></svg>
<svg class="r" style="left:1893px;top:1010px;" width="19" height="19" viewBox="0 0 19 19"><circle cx="9.5" cy="9.5" r="8.3" fill="none" stroke="#bdbdbd" stroke-width="1.3"/><path d="M5.5 9.5 L8.3 12.3 L13.5 7" fill="none" stroke="#bdbdbd" stroke-width="1.6"/></svg>
</body></html>
